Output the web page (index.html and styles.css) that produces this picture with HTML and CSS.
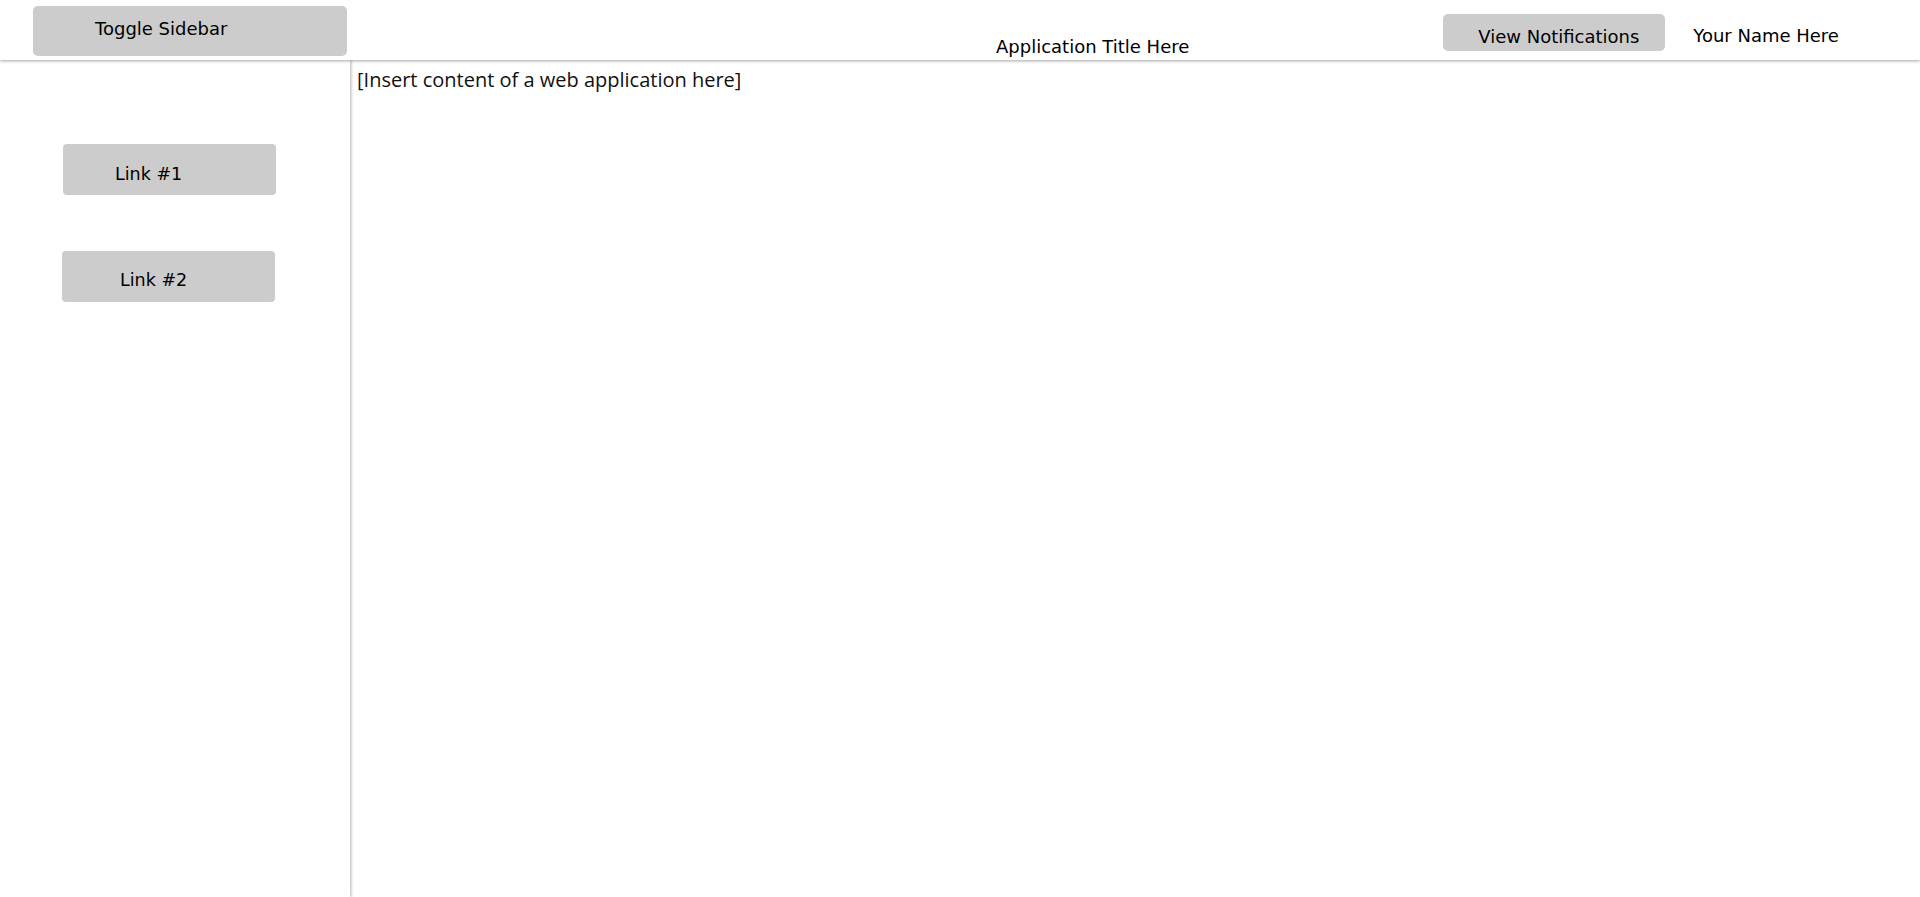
FILE: index.html
```html
<!DOCTYPE html>
<html>
<head>
<meta charset="utf-8">
<title>App</title>
<link rel="stylesheet" href="styles.css">
</head>
<body>
<header class="topbar">
  <button class="toggle">Toggle Sidebar</button>
  <div class="title">Application Title Here</div>
  <button class="notif">View Notifications</button>
  <div class="user">Your Name Here</div>
</header>
<div class="layout">
  <aside class="sidebar">
    <a class="navlink first" href="#">Link #1</a>
    <a class="navlink second" href="#">Link #2</a>
  </aside>
  <main class="content">[Insert content of a web application here]</main>
</div>
</body>
</html>
```
FILE: styles.css
```css
html, body {
  margin: 0;
  padding: 0;
  height: 100%;
  background: #fff;
}
body {
  font-family: "DejaVu Sans", Verdana, sans-serif;
  color: #000;
  display: flex;
  flex-direction: column;
  overflow: hidden;
}
.topbar {
  height: 60px;
  flex: 0 0 60px;
  display: flex;
  align-items: flex-start;
  box-shadow: 0 1px 3px rgba(0,0,0,0.35);
  position: relative;
  z-index: 2;
  background: #fff;
}
.toggle {
  margin: 6px 0 0 33px;
  width: 314px;
  height: 50px;
  border: none;
  border-radius: 5px;
  background: #ccc;
  font-family: "DejaVu Sans", Verdana, sans-serif;
  font-size: 18px;
  color: #000;
  text-align: left;
  padding: 0 0 6px 62px;
}
.title {
  margin: 35px 0 0 649px;
  font-size: 18px;
  line-height: 24px;
}
.notif {
  margin: 14px 0 0 254px;
  width: 222px;
  height: 37px;
  border: none;
  border-radius: 5px;
  background: #ccc;
  font-family: "DejaVu Sans", Verdana, sans-serif;
  font-size: 18px;
  color: #000;
  text-align: left;
  padding: 8px 0 0 35px;
}
.user {
  margin: 24px 0 0 28px;
  font-size: 18px;
  line-height: 24px;
}
.layout {
  flex: 1;
  display: flex;
}
.sidebar {
  width: 350px;
  flex: 0 0 350px;
  box-shadow: 1px 0 3px rgba(0,0,0,0.3);
  display: flex;
  flex-direction: column;
  align-items: flex-start;
  position: relative;
  z-index: 1;
}
.navlink {
  display: block;
  box-sizing: border-box;
  width: 213px;
  height: 51px;
  background: #ccc;
  border: 1px dotted #555;
  border-color: #ccc;
  border-radius: 4px;
  color: #000;
  text-decoration: none;
  font-size: 17.5px;
  line-height: 24px;
}
.navlink.first {
  margin: 84px 0 0 63px;
  padding: 17px 0 0 51px;
}
.navlink.second {
  margin: 56px 0 0 62px;
  padding: 16px 0 0 57px;
}
.content {
  flex: 1;
  padding: 6px 0 0 7px;
  font-family: "Open Sans", "Noto Sans", sans-serif;
  font-size: 20px;
  line-height: 28px;
  color: #111;
}
```
